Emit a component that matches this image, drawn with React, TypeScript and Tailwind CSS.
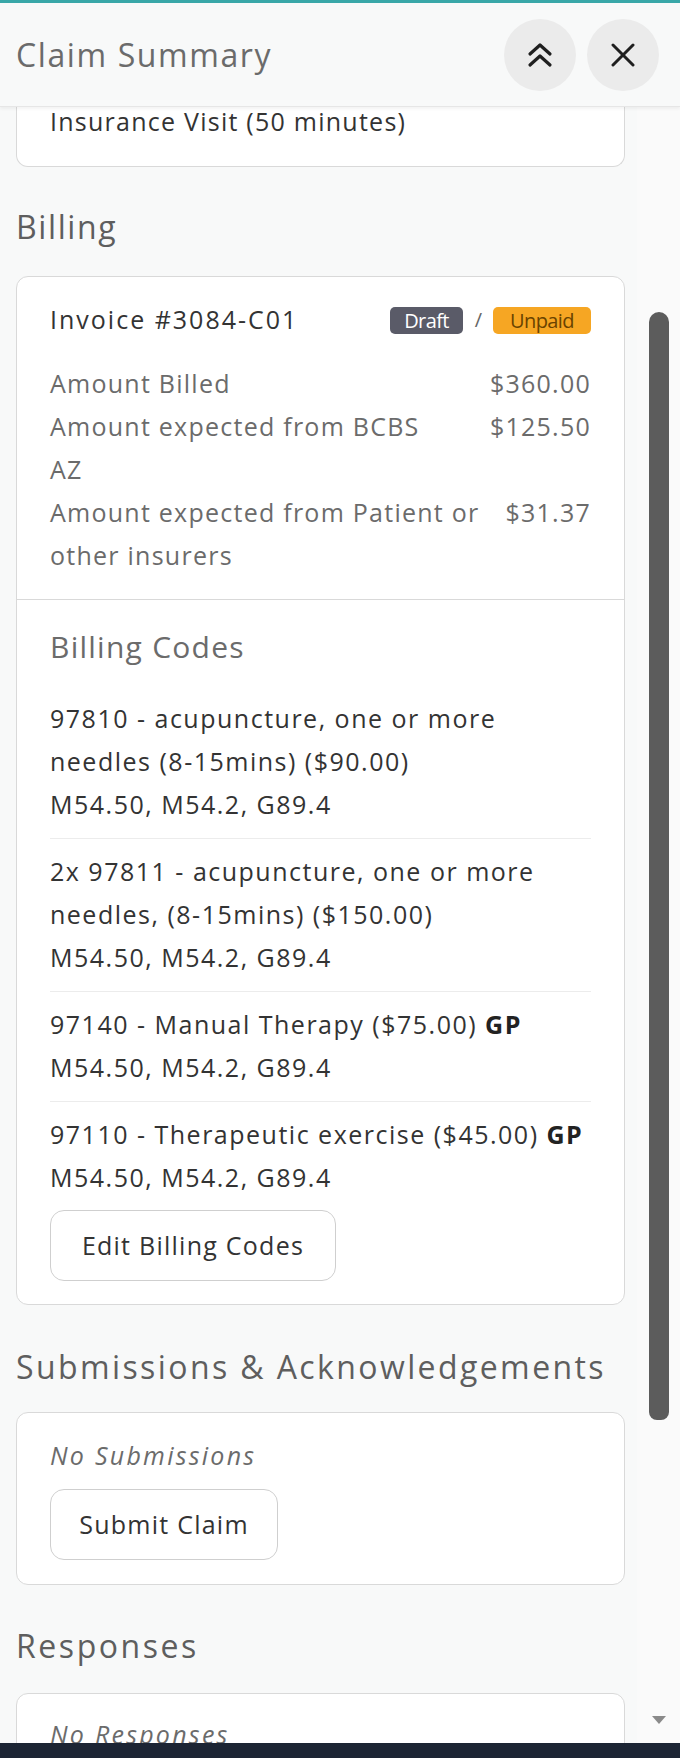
import React from "react";

const F = { fontFamily: "'Open Sans', Lato, sans-serif" };

function ChevronsUpIcon() {
  return (
    <svg width="26" height="28" viewBox="0 0 26 28" fill="none" stroke="#1f1f1f" strokeWidth="3.2" strokeLinecap="round" strokeLinejoin="round">
      <path d="M3 13L13 4l10 9" />
      <path d="M3 24l10-9 10 9" />
    </svg>
  );
}

function XIcon() {
  return (
    <svg width="24" height="24" viewBox="0 0 24 24" fill="none" stroke="#1f1f1f" strokeWidth="3" strokeLinecap="round">
      <path d="M2 2l20 20" />
      <path d="M22 2L2 22" />
    </svg>
  );
}

function CodeItem({ lines, gp, last }: { lines: string[]; gp?: boolean; last?: boolean }) {
  return (
    <div className={`${last ? "" : "border-b border-[#ececec] pb-[12px]"} pt-[11px] first:pt-0`}>
      {lines.map((l, i) => (
        <div key={i} className="leading-[43px] whitespace-nowrap">
          {l}
          {gp && i === 0 ? <span className="font-bold text-[#222]"> GP</span> : null}
        </div>
      ))}
      <div className="leading-[43px]">M54.50, M54.2, G89.4</div>
    </div>
  );
}

export default function App() {
  return (
    <div className="relative w-[680px] h-[1758px] overflow-hidden bg-[#f8f9f9]" style={F}>
      <div className="h-[3px] bg-[#39a7a8]" />
      <div className="h-[104px] flex items-center justify-between pl-4 pr-[21px] bg-[#f8f9f9] border-b border-[#e6e6e6] shadow-[0_2px_3px_rgba(0,0,0,0.05)] relative z-10">
        <div className="text-[32px] text-[#6b6b6b] tracking-[0.05em]">Claim Summary</div>
        <div className="flex gap-[11px]">
          <div className="w-[72px] h-[72px] rounded-full bg-[#ebebeb] flex items-center justify-center">
            <ChevronsUpIcon />
          </div>
          <div className="w-[72px] h-[72px] rounded-full bg-[#ebebeb] flex items-center justify-center">
            <XIcon />
          </div>
        </div>
      </div>

      <div className="flex">
        <div className="w-[637px] pl-4 pr-3 text-[25px] tracking-[0.05em]">
          <div className="bg-white border border-t-0 border-[#d9d9d9] rounded-b-[12px] px-[33px] pb-[31px] text-[#333]">
            <div className="leading-[28px]">Insurance Visit (50 minutes)</div>
          </div>

          <div className="mt-[40px] mb-[29px] text-[32px] leading-[40px] text-[#5e5e5e] tracking-[0.05em]">Billing</div>

          <div className="bg-white border border-[#d9d9d9] rounded-[12px]">
            <div className="px-[33px] pt-[22px] pb-[22px] border-b border-[#d9d9d9]">
              <div className="flex items-center justify-between h-[42px]">
                <div className="text-[#333] tracking-[0.08em]">Invoice #3084-C01</div>
                <div className="flex items-center text-[20px] tracking-[-0.03em]">
                  <span className="w-[73px] text-center bg-[#5a5b68] text-white rounded-[5px] h-[27px] leading-[27px]">Draft</span>
                  <span className="w-[30px] text-center text-[#666]">/</span>
                  <span className="w-[98px] text-center bg-[#f6a623] text-[#6a4300] rounded-[5px] h-[27px] leading-[27px]">Unpaid</span>
                </div>
              </div>
              <div className="mt-[21px] text-[#6b6b6b] leading-[43px]">
                <div className="flex justify-between">
                  <span>Amount Billed</span>
                  <span>$360.00</span>
                </div>
                <div className="flex justify-between">
                  <span className="whitespace-nowrap">
                    Amount expected from BCBS
                    <br />
                    AZ
                  </span>
                  <span>$125.50</span>
                </div>
                <div className="flex justify-between">
                  <span className="whitespace-nowrap">
                    Amount expected from Patient or
                    <br />
                    other insurers
                  </span>
                  <span>$31.37</span>
                </div>
              </div>
            </div>

            <div className="px-[33px] pt-[27px] pb-[23px]">
              <div className="text-[30px] leading-[40px] text-[#6b6b6b]">Billing Codes</div>
              <div className="mt-[30px] text-[#333] tracking-[0.06em]">
                <CodeItem lines={["97810 - acupuncture, one or more", "needles (8-15mins) ($90.00)"]} />
                <CodeItem lines={["2x 97811 - acupuncture, one or more", "needles, (8-15mins) ($150.00)"]} />
                <CodeItem lines={["97140 - Manual Therapy ($75.00)"]} gp />
                <CodeItem lines={["97110 - Therapeutic exercise ($45.00)"]} gp last />
              </div>
              <button className="mt-[11px] h-[71px] w-[286px] rounded-[14px] border border-[#cfcfcf] bg-white text-[#333] text-[25px] tracking-[0.05em]">
                Edit Billing Codes
              </button>
            </div>
          </div>

          <div className="mt-[42px] mb-[25px] text-[32px] leading-[40px] text-[#5e5e5e] whitespace-nowrap tracking-[0.075em]">Submissions &amp; Acknowledgements</div>

          <div className="bg-white border border-[#d9d9d9] rounded-[12px] px-[33px] pt-[21px] pb-[24px]">
            <div className="italic text-[#6b6b6b] leading-[43px] tracking-[0.09em]">No Submissions</div>
            <button className="mt-[12px] h-[71px] w-[228px] rounded-[14px] border border-[#cfcfcf] bg-white text-[#333] text-[25px] tracking-[0.05em]">
              Submit Claim
            </button>
          </div>

          <div className="mt-[41px] mb-[27px] text-[32px] leading-[40px] text-[#5e5e5e] tracking-[0.08em]">Responses</div>

          <div className="bg-white border border-[#d9d9d9] rounded-[12px] px-[33px] pt-[19px] pb-[24px]">
            <div className="italic text-[#6b6b6b] leading-[43px] tracking-[0.09em]">No Responses</div>
          </div>
        </div>

        <div className="flex-1 bg-[#fafafa] flex flex-col items-center pt-[205px]">
          <div className="w-[20px] h-[1108px] rounded-t-[10px] rounded-b-[8px] bg-[#5c5c5c]" />
          <div className="mt-[296px] w-0 h-0 border-l-[7px] border-r-[7px] border-t-[8px] border-l-transparent border-r-transparent border-t-[#8a8a8a]" />
        </div>
      </div>

      <div className="absolute left-0 right-0 bottom-0 h-[15px] bg-[#1c2534]" />
    </div>
  );
}
